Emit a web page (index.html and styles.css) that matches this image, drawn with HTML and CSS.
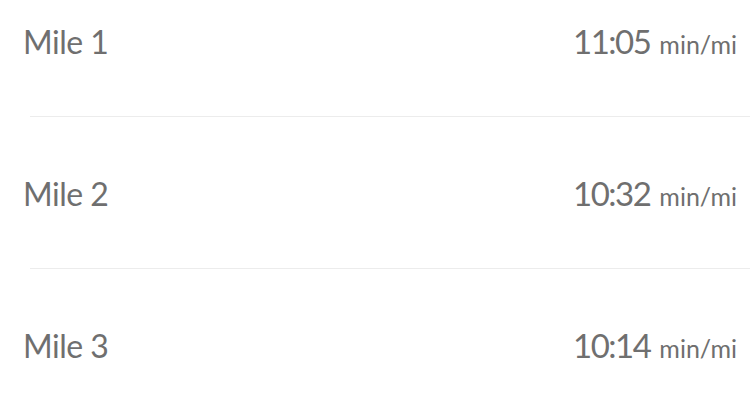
FILE: index.html
```html
<!DOCTYPE html>
<html lang="en">
<head>
    <meta charset="UTF-8">
    <meta name="viewport" content="width=device-width, initial-scale=1.0">
    <title>Splits</title>
    <link rel="stylesheet" href="styles.css">
</head>
<body>
    <ul class="splits">
        <li class="split">
            <span class="split-name">Mile 1</span>
            <span class="split-pace">11:05<small>min/mi</small></span>
        </li>
        <li class="split">
            <span class="split-name">Mile 2</span>
            <span class="split-pace">10:32<small>min/mi</small></span>
        </li>
        <li class="split">
            <span class="split-name">Mile 3</span>
            <span class="split-pace">10:14<small>min/mi</small></span>
        </li>
    </ul>
</body>
</html>
```

FILE: styles.css
```css
:root {
    --text-color: #6f6f6f;
    --divider-color: #ececec;
}

* {
    margin: 0;
    padding: 0;
    box-sizing: border-box;
}

body {
    font-family: 'Lato', 'Open Sans', sans-serif;
    background-color: #ffffff;
    color: var(--text-color);
    height: 100vh;
    overflow: hidden;
}

.splits {
    list-style: none;
    margin-top: -35px;
}

.split {
    position: relative;
    height: 152px;
    display: flex;
    align-items: center;
    justify-content: space-between;
    padding: 0 13px 0 23px;
}

/* divider is inset from the left edge */
.split + .split::before {
    content: "";
    position: absolute;
    top: -1px;
    left: 30px;
    right: 0;
    height: 1px;
    background-color: var(--divider-color);
}

.split-name {
    font-size: 32px;
    letter-spacing: -0.5px;
}

.split-pace {
    font-size: 33px;
    letter-spacing: -1.5px;
}

.split-pace small {
    font-size: 25px;
    letter-spacing: 0;
    margin-left: 9px;
}
```
